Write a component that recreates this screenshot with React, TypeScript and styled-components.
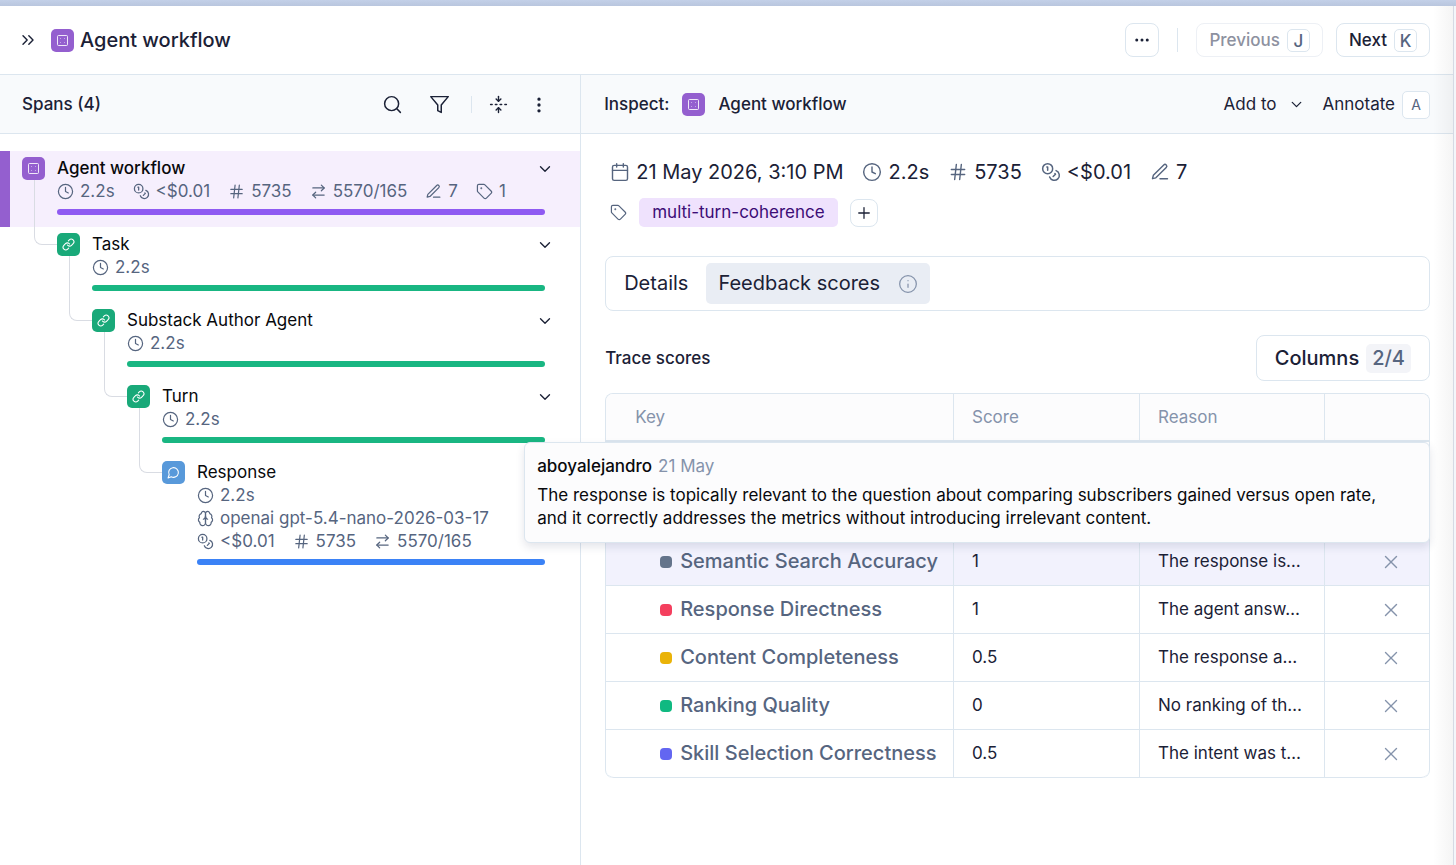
import React from "react";
import styled, { createGlobalStyle } from "styled-components";
import {
  ArrowRightLeft,
  Calendar,
  ChevronDown,
  ChevronsRight,
  Clock,
  Ellipsis,
  EllipsisVertical,
  FoldVertical,
  Hash,
  Info,
  Link as LinkIcon,
  Plus,
  Search,
  Tag,
  X,
} from "lucide-react";

const color = {
  ink: "#1b2136",
  black: "#08090c",
  slate: "#56657f",
  muted: "#8593ab",
  line: "#dce6ef",
  bar: "#f8fafc",
  purple: "#945fcf",
  green: "#19a979",
  blue: "#5899da",
};

const Global = createGlobalStyle`
  *, *::before, *::after { box-sizing: border-box; }
  body {
    margin: 0;
    background: #fff;
    color: ${color.ink};
    font-family: Inter, "Liberation Sans", sans-serif;
    font-size: 17px;
    line-height: 23px;
  }
  button { font: inherit; color: inherit; background: none; border: 0; padding: 0; margin: 0; cursor: pointer; }
  h1, h2, h3, p, ul { margin: 0; padding: 0; font: inherit; }
  ul { list-style: none; }
  svg { display: block; flex: none; }
`;

const Page = styled.div`
  display: flex;
  flex-direction: column;
  min-height: 100vh;
  background: #f4f6fa;
`;

const Backdrop = styled.div`
  height: 6px;
  background: linear-gradient(#c3d0e8, #b9c6de);
`;

const Sheet = styled.div`
  position: relative;
  flex: 1;
  display: flex;
  flex-direction: column;
  margin-right: 2px;
  background: #fff;
  border-right: 1px solid #d5dae4;
  &::after {
    content: "";
    position: absolute;
    inset: 0 0 0 auto;
    width: 20px;
    background: linear-gradient(90deg, rgba(120, 120, 120, 0), rgba(120, 120, 120, 0.08));
    pointer-events: none;
  }
`;

const TopBar = styled.header`
  display: flex;
  align-items: center;
  gap: 13px;
  height: 69px;
  padding: 0 23px 0 18px;
  border-bottom: 1px solid ${color.line};
`;

const TitleGroup = styled.div`
  display: flex;
  align-items: center;
  gap: 6px;
  margin-right: auto;
`;

const PageTitle = styled.h1`
  font-size: 20px;
  font-weight: 500;
  line-height: 28px;
`;

const Badge = styled.span<{ $tone: string }>`
  display: grid;
  place-items: center;
  flex: none;
  width: 23px;
  height: 23px;
  border-radius: 5px;
  color: #fff;
  background: ${(p) => p.$tone};
`;

const Divider = styled.span<{ $space: number }>`
  width: 1px;
  height: ${(p) => p.$space}px;
  background: ${color.line};
`;

const OutlineButton = styled.button<{ $faded?: boolean }>`
  display: flex;
  align-items: center;
  justify-content: center;
  gap: 7px;
  min-width: 34px;
  height: 34px;
  padding: 0 12px;
  border: 1px solid ${(p) => (p.$faded ? "#edf0f5" : color.line)};
  border-radius: 8px;
  background: #fff;
  font-weight: 500;
  color: ${(p) => (p.$faded ? "#8d91a0" : color.ink)};
`;

const IconOutlineButton = styled(OutlineButton)`
  padding: 0;
`;

const PagerGroup = styled.div`
  display: flex;
  align-items: center;
  gap: 18px;
`;

const Key = styled.kbd<{ $large?: boolean }>`
  display: grid;
  place-items: center;
  width: ${(p) => (p.$large ? 28 : 23)}px;
  height: ${(p) => (p.$large ? 28 : 23)}px;
  border: 1px solid ${color.line};
  border-radius: 5px;
  background: #fff;
  color: ${color.slate};
  font-family: inherit;
  font-size: ${(p) => (p.$large ? 14 : 17)}px;
  font-weight: ${(p) => (p.$large ? 400 : 500)};
`;

const Columns = styled.main`
  flex: 1;
  display: grid;
  grid-template-columns: 2fr 3fr;
`;

const SpansPane = styled.section`
  min-width: 0;
  border-right: 1px solid ${color.line};
`;

const InspectPane = styled.section`
  min-width: 0;
`;

const PaneBar = styled.div`
  display: flex;
  align-items: center;
  height: 59px;
  padding: 1px 23px 0;
  border-bottom: 1px solid ${color.line};
  background: ${color.bar};
`;

const SpansBar = styled(PaneBar)`
  padding: 1px 27px 0 22px;
`;

const PaneTitle = styled.h2`
  display: flex;
  align-items: center;
  gap: 13px;
  margin-right: auto;
  font-weight: 500;
`;

const Tools = styled.div`
  display: flex;
  align-items: center;
  gap: 17px;
`;

const ToolPair = styled.div`
  display: flex;
  gap: 26px;
  margin-right: 4px;
`;

const PlainButton = styled.button`
  display: flex;
  align-items: center;
  gap: 12px;
`;

const KeyedButton = styled(PlainButton)`
  gap: 7px;
`;

const MenuButton = styled(PlainButton)`
  justify-content: center;
  width: 28px;
`;

const Tree = styled.ul`
  padding-top: 17px;
`;

const Span = styled.li<{ $depth: number; $selected?: boolean }>`
  display: flex;
  gap: 12px;
  padding: 6px 35px 12px ${(p) => (p.$selected ? 12 : 22) + p.$depth * 35}px;
  border-left: ${(p) => (p.$selected ? `10px solid ${color.purple}` : "0")};
  background: ${(p) => (p.$selected ? "#f6effd" : "transparent")};
`;

const SpanMarker = styled.div<{ $linked: boolean }>`
  position: relative;
  height: 23px;
  &::before {
    content: "";
    display: ${(p) => (p.$linked ? "block" : "none")};
    position: absolute;
    left: -23px;
    top: -53px;
    width: 23px;
    height: 65px;
    border: solid #d9dce3;
    border-width: 0 0 1px 1px;
    border-bottom-left-radius: 8px;
  }
`;

const SpanBody = styled.div`
  flex: 1;
  min-width: 0;
`;

const SpanHead = styled.div`
  display: flex;
  justify-content: space-between;
  align-items: center;
`;

const SpanName = styled.h3<{ $bold?: boolean }>`
  color: ${color.black};
  font-weight: ${(p) => (p.$bold ? 500 : 400)};
`;

const Toggle = styled.button`
  margin-right: -9px;
`;

const MetaLine = styled.div`
  display: flex;
  gap: 18px;
  color: ${color.slate};
  white-space: nowrap;
`;

const Meta = styled.span`
  display: flex;
  align-items: center;
  gap: 6px;
`;

const Duration = styled.div<{ $tone: string }>`
  height: 6px;
  margin-top: 6px;
  border-radius: 3px;
  background: ${(p) => p.$tone};
`;

const InspectBody = styled.div`
  display: flex;
  flex-direction: column;
  padding: 24px 23px 24px 24px;
`;

const Facts = styled.div`
  display: flex;
  gap: 19px;
  padding-left: 5px;
  font-size: 20px;
  line-height: 28px;
  svg { color: ${color.slate}; }
`;

const TagRow = styled.div`
  display: flex;
  align-items: center;
  gap: 12px;
  margin-top: 12px;
  padding-left: 5px;
  color: ${color.slate};
`;

const TagPill = styled.span`
  padding: 3px 13px;
  border-radius: 5px;
  background: #efe2fd;
  color: #3c0c76;
`;

const AddTag = styled(OutlineButton)`
  min-width: 28px;
  height: 28px;
  padding: 0;
`;

const TabBar = styled.div`
  display: flex;
  gap: 6px;
  margin-top: 29px;
  padding: 6px;
  border: 1px solid ${color.line};
  border-radius: 8px;
`;

const Tab = styled.button<{ $active?: boolean }>`
  display: flex;
  align-items: center;
  gap: 18px;
  height: 41px;
  padding: 0 12px;
  border-radius: 5px;
  font-size: 20px;
  background: ${(p) => (p.$active ? "#e9edf4" : "transparent")};
  svg { color: ${color.muted}; }
`;

const ScoresHead = styled.div`
  display: flex;
  align-items: center;
  justify-content: space-between;
  margin-top: 24px;
  font-weight: 500;
`;

const ColumnsButton = styled(OutlineButton)`
  height: 46px;
  padding: 0 18px;
  font-size: 20px;
`;

const Count = styled.span`
  padding: 3px 6px;
  border-radius: 5px;
  background: #f3f4f8;
  color: ${color.slate};
`;

const TableFrame = styled.div`
  position: relative;
  margin-top: 12px;
`;

const ScoreTable = styled.table`
  width: 100%;
  table-layout: fixed;
  border-collapse: separate;
  border-spacing: 0;
  border: 1px solid ${color.line};
  border-bottom: 0;
  border-radius: 8px;
  overflow: hidden;
`;

const Col = styled.col<{ $width?: number }>`
  width: ${(p) => (p.$width ? `${p.$width}px` : "auto")};
`;

const HeadCell = styled.th`
  height: 48px;
  padding: 0 18px;
  border-bottom: 2px solid ${color.line};
  border-left: 1px solid ${color.line};
  background: #fcfcfd;
  color: ${color.muted};
  font-weight: 400;
  text-align: left;
  &:first-child { padding-left: 29px; border-left: 0; }
`;

const ScoreRow = styled.tr<{ $active?: boolean; $tall?: boolean }>`
  height: ${(p) => (p.$tall ? 96 : 48)}px;
  background: ${(p) => (p.$active ? "#f2f2fd" : "#fff")};
`;

const Cell = styled.td`
  padding: 0 18px;
  border-bottom: 1px solid ${color.line};
  border-left: 1px solid ${color.line};
  overflow: hidden;
  text-overflow: ellipsis;
  white-space: nowrap;
  &:first-child { padding: 0 0 0 54px; border-left: 0; }
  tr:last-child > &:first-child { border-bottom-left-radius: 8px; }
  tr:last-child > &:last-child { border-bottom-right-radius: 8px; }
`;

const ScoreName = styled.span`
  display: flex;
  align-items: center;
  gap: 8px;
  color: ${color.slate};
  font-size: 20px;
  font-weight: 500;
`;

const Dot = styled.i<{ $tone: string }>`
  width: 12px;
  height: 12px;
  border-radius: 4px;
  background: ${(p) => p.$tone};
`;

const RemoveButton = styled.button`
  display: block;
  margin-left: auto;
  margin-right: 9px;
  color: ${color.muted};
`;

const ReasonCard = styled.div`
  position: absolute;
  top: 49px;
  left: -81px;
  right: 0;
  padding: 12px 24px 12px 12px;
  border: 1px solid ${color.line};
  border-radius: 6px;
  background: #fcfcfd;
  color: ${color.black};
  box-shadow: 0 4px 8px rgba(30, 40, 80, 0.12);
`;

const CardHead = styled.div`
  display: flex;
  gap: 6px;
  margin-bottom: 6px;
`;

const Author = styled.strong`
  font-weight: 500;
`;

const When = styled.time`
  color: ${color.muted};
`;

const Drawing = styled.svg.attrs({
  viewBox: "0 0 24 24",
  fill: "none",
  stroke: "currentColor",
  strokeLinecap: "round",
  strokeLinejoin: "round",
})``;

const AgentGlyph = () => (
  <svg width="13" height="13" viewBox="0 0 13 13" fill="none" stroke="currentColor">
    <rect x="1.5" y="1.5" width="10" height="10" rx="1" strokeOpacity="0.85" />
    <path d="M4 4.5h1M8 4.5h1M4 8.5h1M8 8.5h1" strokeOpacity="0.45" />
  </svg>
);

const ChatGlyph = () => (
  <Drawing width={13} height={13} strokeWidth={2}>
    <path d="M7.9 20A9 9 0 1 0 4 16.1L2 22Z" />
  </Drawing>
);

const FunnelGlyph = () => (
  <Drawing width={21} height={21} strokeWidth={1.7}>
    <path d="M22 3H2l8 9.46V19l4 2v-8.54L22 3z" />
  </Drawing>
);

const CoinsGlyph = ({ size }: { size: number }) => (
  <Drawing width={size} height={size} strokeWidth={1.8}>
    <circle cx="8" cy="8" r="6" />
    <path d="M18.09 10.37A6 6 0 1 1 10.34 18" />
    <path d="M7 6h1v4" />
    <path d="m16.71 13.88.7.71-2.82 2.82" />
  </Drawing>
);

const PenGlyph = ({ size }: { size: number }) => (
  <Drawing width={size} height={size} strokeWidth={1.7}>
    <path d="M12 20h9" />
    <path d="M16.5 3.5a2.12 2.12 0 0 1 3 3L7 19l-4 1 1-4Z" />
  </Drawing>
);

const BrainGlyph = ({ size }: { size: number }) => (
  <Drawing width={size} height={size} strokeWidth={1.7}>
    <path d="M12 5a3 3 0 1 0-5.997.125 4 4 0 0 0-2.526 5.77 4 4 0 0 0 .556 6.588A4 4 0 1 0 12 18Z" />
    <path d="M12 5a3 3 0 1 1 5.997.125 4 4 0 0 1 2.526 5.77 4 4 0 0 1-.556 6.588A4 4 0 1 1 12 18Z" />
    <path d="M15 13a4.5 4.5 0 0 1-3-4 4.5 4.5 0 0 1-3 4" />
  </Drawing>
);

type IconName = "clock" | "coins" | "hash" | "swap" | "pen" | "tag" | "brain" | "calendar";

const MetaIcon = ({ name, size = 17 }: { name: IconName; size?: number }) => {
  if (name === "coins") return <CoinsGlyph size={size} />;
  if (name === "pen") return <PenGlyph size={size} />;
  if (name === "brain") return <BrainGlyph size={size} />;
  const icons = { clock: Clock, hash: Hash, swap: ArrowRightLeft, tag: Tag, calendar: Calendar };
  const Icon = icons[name];
  return <Icon size={size} strokeWidth={1.7} />;
};

type Fact = [IconName, string];

interface SpanData {
  name: string;
  kind: "agent" | "link" | "chat";
  lines: Fact[][];
}

const spans: SpanData[] = [
  {
    name: "Agent workflow",
    kind: "agent",
    lines: [[["clock", "2.2s"], ["coins", "<$0.01"], ["hash", "5735"], ["swap", "5570/165"], ["pen", "7"], ["tag", "1"]]],
  },
  { name: "Task", kind: "link", lines: [[["clock", "2.2s"]]] },
  { name: "Substack Author Agent", kind: "link", lines: [[["clock", "2.2s"]]] },
  { name: "Turn", kind: "link", lines: [[["clock", "2.2s"]]] },
  {
    name: "Response",
    kind: "chat",
    lines: [
      [["clock", "2.2s"]],
      [["brain", "openai gpt-5.4-nano-2026-03-17"]],
      [["coins", "<$0.01"], ["hash", "5735"], ["swap", "5570/165"]],
    ],
  },
];

const kinds = {
  agent: { tone: color.purple, bar: "#8f5af2", glyph: <AgentGlyph /> },
  link: { tone: color.green, bar: "#19b682", glyph: <LinkIcon size={13} strokeWidth={2} /> },
  chat: { tone: color.blue, bar: "#3b82f6", glyph: <ChatGlyph /> },
};

const facts: Fact[] = [
  ["calendar", "21 May 2026, 3:10 PM"],
  ["clock", "2.2s"],
  ["hash", "5735"],
  ["coins", "<$0.01"],
  ["pen", "7"],
];

const scores = [
  { name: "Semantic Search Accuracy", tone: "#64748b", score: "1", reason: "The response is…", active: true },
  { name: "Response Directness", tone: "#f43f5e", score: "1", reason: "The agent answ…" },
  { name: "Content Completeness", tone: "#eab308", score: "0.5", reason: "The response a…" },
  { name: "Ranking Quality", tone: "#10b981", score: "0", reason: "No ranking of th…" },
  { name: "Skill Selection Correctness", tone: "#6366f1", score: "0.5", reason: "The intent was t…" },
];

export default function App() {
  return (
    <>
      <Global />
      <Page>
        <Backdrop />
        <Sheet>
          <TopBar>
            <PlainButton aria-label="Collapse panel">
              <ChevronsRight size={20} strokeWidth={1.7} />
            </PlainButton>
            <TitleGroup>
              <Badge $tone={color.purple}><AgentGlyph /></Badge>
              <PageTitle>Agent workflow</PageTitle>
            </TitleGroup>
            <PagerGroup>
              <IconOutlineButton aria-label="More actions"><Ellipsis size={18} strokeWidth={2} /></IconOutlineButton>
              <Divider $space={24} />
              <OutlineButton $faded>Previous <Key>J</Key></OutlineButton>
            </PagerGroup>
            <OutlineButton>Next <Key>K</Key></OutlineButton>
          </TopBar>

          <Columns>
            <SpansPane>
              <SpansBar>
                <PaneTitle>Spans (4)</PaneTitle>
                <Tools>
                  <ToolPair>
                    <PlainButton aria-label="Search spans"><Search size={21} strokeWidth={1.7} /></PlainButton>
                    <PlainButton aria-label="Filter spans"><FunnelGlyph /></PlainButton>
                  </ToolPair>
                  <Divider $space={17} />
                  <PlainButton aria-label="Collapse all"><FoldVertical size={19} strokeWidth={1.8} /></PlainButton>
                  <MenuButton aria-label="Span options"><EllipsisVertical size={20} strokeWidth={2} /></MenuButton>
                </Tools>
              </SpansBar>
              <Tree>
                {spans.map((span, depth) => {
                  const kind = kinds[span.kind];
                  return (
                    <Span key={span.name} $depth={depth} $selected={depth === 0}>
                      <SpanMarker $linked={depth > 0}>
                        <Badge $tone={kind.tone}>{kind.glyph}</Badge>
                      </SpanMarker>
                      <SpanBody>
                        <SpanHead>
                          <SpanName $bold={depth === 0}>{span.name}</SpanName>
                          {span.kind !== "chat" && (
                            <Toggle aria-label={`Collapse ${span.name}`}>
                              <ChevronDown size={18} strokeWidth={1.8} />
                            </Toggle>
                          )}
                        </SpanHead>
                        {span.lines.map((line, i) => (
                          <MetaLine key={i}>
                            {line.map(([icon, text]) => (
                              <Meta key={icon}><MetaIcon name={icon} />{text}</Meta>
                            ))}
                          </MetaLine>
                        ))}
                        <Duration $tone={kind.bar} />
                      </SpanBody>
                    </Span>
                  );
                })}
              </Tree>
            </SpansPane>

            <InspectPane>
              <PaneBar>
                <PaneTitle>
                  Inspect: <Badge $tone={color.purple}><AgentGlyph /></Badge> Agent workflow
                </PaneTitle>
                <Tools>
                  <PlainButton>Add to <ChevronDown size={17} strokeWidth={1.8} /></PlainButton>
                  <KeyedButton>Annotate <Key $large>A</Key></KeyedButton>
                </Tools>
              </PaneBar>
              <InspectBody>
                <Facts>
                  {facts.map(([icon, text]) => (
                    <Meta key={icon}><MetaIcon name={icon} size={20} />{text}</Meta>
                  ))}
                </Facts>
                <TagRow>
                  <MetaIcon name="tag" />
                  <TagPill>multi-turn-coherence</TagPill>
                  <AddTag aria-label="Add tag"><Plus size={18} strokeWidth={1.7} /></AddTag>
                </TagRow>
                <TabBar role="tablist">
                  <Tab role="tab" aria-selected="false">Details</Tab>
                  <Tab role="tab" aria-selected="true" $active>
                    Feedback scores <Info size={20} strokeWidth={1.5} />
                  </Tab>
                </TabBar>
                <ScoresHead>
                  <h3>Trace scores</h3>
                  <ColumnsButton>Columns <Count>2/4</Count></ColumnsButton>
                </ScoresHead>
                <TableFrame>
                  <ScoreTable>
                    <colgroup>
                      <Col />
                      <Col $width={186} />
                      <Col $width={185} />
                      <Col $width={105} />
                    </colgroup>
                    <thead>
                      <tr>
                        <HeadCell scope="col">Key</HeadCell>
                        <HeadCell scope="col">Score</HeadCell>
                        <HeadCell scope="col">Reason</HeadCell>
                        <HeadCell scope="col" aria-label="Actions" />
                      </tr>
                    </thead>
                    <tbody>
                      <ScoreRow $tall aria-hidden="true"><Cell /><Cell /><Cell /><Cell /></ScoreRow>
                      {scores.map((row) => (
                        <ScoreRow key={row.name} $active={row.active}>
                          <Cell><ScoreName><Dot $tone={row.tone} />{row.name}</ScoreName></Cell>
                          <Cell>{row.score}</Cell>
                          <Cell>{row.reason}</Cell>
                          <Cell>
                            <RemoveButton aria-label={`Remove ${row.name}`}><X size={22} strokeWidth={1.5} /></RemoveButton>
                          </Cell>
                        </ScoreRow>
                      ))}
                    </tbody>
                  </ScoreTable>
                  <ReasonCard role="tooltip">
                    <CardHead><Author>aboyalejandro</Author><When>21 May</When></CardHead>
                    <p>
                      The response is topically relevant to the question about comparing subscribers gained versus open rate,
                      and it correctly addresses the metrics without introducing irrelevant content.
                    </p>
                  </ReasonCard>
                </TableFrame>
              </InspectBody>
            </InspectPane>
          </Columns>
        </Sheet>
      </Page>
    </>
  );
}
